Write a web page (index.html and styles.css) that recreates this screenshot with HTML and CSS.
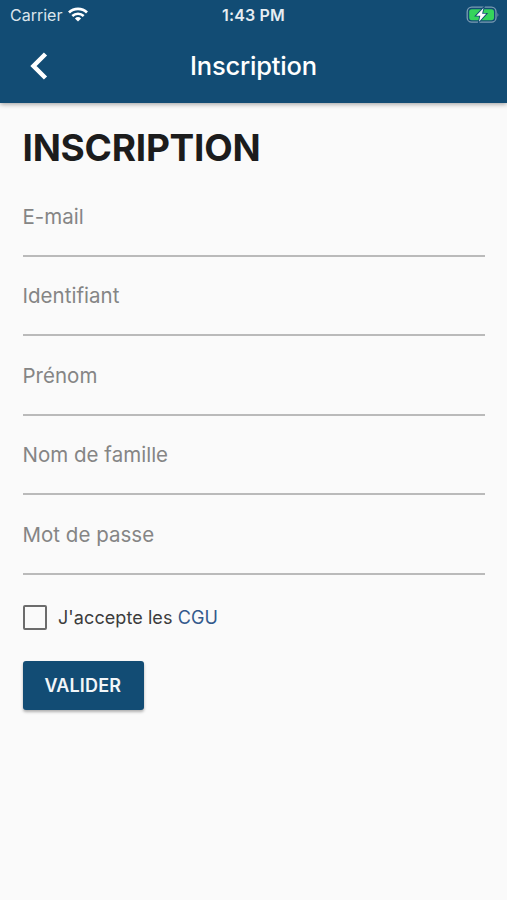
FILE: index.html
```html
<!DOCTYPE html>
<html lang="fr">
<head>
<meta charset="utf-8">
<meta name="viewport" content="width=device-width, initial-scale=1">
<title>Inscription</title>
<link rel="stylesheet" href="styles.css">
</head>
<body>
<header class="header">
  <div class="status">
    <div class="status-left">
      <span class="carrier">Carrier</span>
      <svg class="wifi" width="20" height="15" viewBox="0 0 20 15" fill="none" stroke="#fff">
        <path d="M1 5.4C6 .7 14 .7 19 5.4" stroke-width="2.8"/>
        <path d="M4.3 9C7.5 6 12.500 6 15.700 9" stroke-width="2.600"/>
        <path d="M10 14.500L6.900 11.400Q10 8.700 13.100 11.400Z" fill="#fff" stroke="none"/>
      </svg>
    </div>
    <span class="time">1:43 PM</span>
    <svg class="battery" width="34" height="18" viewBox="0 0 34 18">
      <rect x="1.200" y="1.200" width="28.800" height="15" rx="4.500" fill="none" stroke="#7c9bb3" stroke-width="1.300"/>
      <path d="M31.500 6.500Q33.200 8.700 31.500 11Z" fill="#7c9bb3"/>
      <rect x="3.200" y="3.200" width="24.800" height="11" rx="2.600" fill="#35d45b"/>
      <path d="M17.500 1.900L10.200 9.700H14.300L13 15.700L20.200 7.800H16.100Z" fill="#fff" stroke="#124c74" stroke-width="1.800" paint-order="stroke"/>
    </svg>
  </div>
  <nav class="navbar">
    <svg class="back" width="18" height="28" viewBox="0 0 18 28" fill="none" stroke="#fff" stroke-width="4.500">
      <path d="M15.500 2L3.500 14L15.500 26"/>
    </svg>
    <span class="nav-title">Inscription</span>
  </nav>
</header>
<main class="content">
  <h1 class="title">INSCRIPTION</h1>
  <form class="form">
    <div class="field"><label>E-mail</label></div>
    <div class="field"><label>Identifiant</label></div>
    <div class="field"><label>Prénom</label></div>
    <div class="field"><label>Nom de famille</label></div>
    <div class="field"><label>Mot de passe</label></div>
    <div class="terms"><span class="checkbox"></span><span class="terms-text">J'accepte les <a class="link">CGU</a></span></div>
    <button class="submit" type="button">VALIDER</button>
  </form>
</main>
</body>
</html>
```
FILE: styles.css
```css
* { box-sizing: border-box; }
body {
  margin: 0;
  min-height: 900px;
  background: #fafafa;
  font-family: Inter, "Liberation Sans", sans-serif;
  color: #1c1c1c;
}
.header {
  height: 103px;
  background: #124c74;
  color: #fff;
  box-shadow: 0 1px 5px rgba(0, 0, 0, .4);
}
.status {
  display: grid;
  grid-template-columns: 1fr auto 1fr;
  align-items: center;
  height: 29px;
  padding: 0 7px 0 10px;
}
.status-left { display: flex; align-items: center; gap: 6px; }
.carrier { font-size: 16px; color: #dbe5ec; }
.time { margin-right: 3px; font-size: 16px; font-weight: 600; letter-spacing: .15px; color: #e6edf2; }
.battery { justify-self: end; }
.navbar {
  display: grid;
  grid-template-columns: 1fr auto 1fr;
  align-items: center;
  height: 74px;
  padding: 0 30px;
}
.nav-title { font-size: 25.500px; font-weight: 500; line-height: 32px; letter-spacing: -.2px; }
.content { padding: 24px 22px 0 22.500px; }
.title {
  margin: 0;
  font-size: 37px;
  line-height: 42px;
  font-weight: 700;
  letter-spacing: -.25px;
}
.form { padding-top: 8.400px; }
.field {
  height: 79.500px;
  padding-top: 25.500px;
  border-bottom: 2px solid #bababa;
}
.field label {
  display: block;
  font-size: 20.500px;
  line-height: 28px;
  letter-spacing: .02px;
  color: #858585;
}
.terms { display: flex; align-items: center; gap: 11px; margin-top: 29.500px; height: 26px; }
.checkbox { width: 24.500px; height: 25px; border: 2px solid #6c6c6c; border-radius: 2px; }
.terms-text { font-size: 18px; letter-spacing: .08px; color: #3c3c3c; white-space: nowrap; }
.link { color: #33598c; }
.submit {
  display: block;
  width: 121.500px;
  height: 49px;
  margin-top: 30.500px;
  padding: 0 1px 0 0;
  border: 0;
  border-radius: 3px;
  background: #124c74;
  color: #f2f6f9;
  font: 600 18px Inter, "Liberation Sans", sans-serif;
  letter-spacing: .15px;
  box-shadow: 0 2px 3px rgba(0, 0, 0, .3);
}
```
